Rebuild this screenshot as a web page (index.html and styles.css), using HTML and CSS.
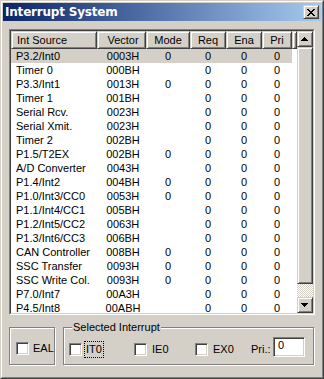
FILE: index.html
```html
<!DOCTYPE html>
<html>
<head>
<meta charset="utf-8">
<title>Interrupt System</title>
<link rel="stylesheet" href="styles.css">
</head>
<body>
<div class="window">
  <div class="frame">
    <div class="titlebar">
      <span class="title">Interrupt System</span>
      <div class="close raised">
        <svg width="8" height="7" viewBox="0 0 8 7" shape-rendering="crispEdges">
          <rect x="0" y="0" width="2" height="1"/><rect x="6" y="0" width="2" height="1"/>
          <rect x="1" y="1" width="2" height="1"/><rect x="5" y="1" width="2" height="1"/>
          <rect x="2" y="2" width="4" height="1"/>
          <rect x="3" y="3" width="2" height="1"/>
          <rect x="2" y="4" width="4" height="1"/>
          <rect x="1" y="5" width="2" height="1"/><rect x="5" y="5" width="2" height="1"/>
          <rect x="0" y="6" width="2" height="1"/><rect x="6" y="6" width="2" height="1"/>
        </svg>
      </div>
    </div>
    <div class="content">
      <div class="lv">
        <div class="lv-in">
          <div class="list">
            <div class="header">
              <div class="hcell c1 raised">Int Source</div>
              <div class="hcell c2 raised">Vector</div>
              <div class="hcell raised">Mode</div>
              <div class="hcell raised">Req</div>
              <div class="hcell raised">Ena</div>
              <div class="hcell raised">Pri</div>
              <div class="hcell raised"></div>
            </div>
            <div class="row sel"><span>P3.2/Int0</span><span class="c2">0003H</span><span>0</span><span>0</span><span>0</span><span>0</span></div>
            <div class="row"><span>Timer 0</span><span class="c2">000BH</span><span></span><span>0</span><span>0</span><span>0</span></div>
            <div class="row"><span>P3.3/Int1</span><span class="c2">0013H</span><span>0</span><span>0</span><span>0</span><span>0</span></div>
            <div class="row"><span>Timer 1</span><span class="c2">001BH</span><span></span><span>0</span><span>0</span><span>0</span></div>
            <div class="row"><span>Serial Rcv.</span><span class="c2">0023H</span><span></span><span>0</span><span>0</span><span>0</span></div>
            <div class="row"><span>Serial Xmit.</span><span class="c2">0023H</span><span></span><span>0</span><span>0</span><span>0</span></div>
            <div class="row"><span>Timer 2</span><span class="c2">002BH</span><span></span><span>0</span><span>0</span><span>0</span></div>
            <div class="row"><span>P1.5/T2EX</span><span class="c2">002BH</span><span>0</span><span>0</span><span>0</span><span>0</span></div>
            <div class="row"><span>A/D Converter</span><span class="c2">0043H</span><span></span><span>0</span><span>0</span><span>0</span></div>
            <div class="row"><span>P1.4/Int2</span><span class="c2">004BH</span><span>0</span><span>0</span><span>0</span><span>0</span></div>
            <div class="row"><span>P1.0/Int3/CC0</span><span class="c2">0053H</span><span>0</span><span>0</span><span>0</span><span>0</span></div>
            <div class="row"><span>P1.1/Int4/CC1</span><span class="c2">005BH</span><span></span><span>0</span><span>0</span><span>0</span></div>
            <div class="row"><span>P1.2/Int5/CC2</span><span class="c2">0063H</span><span></span><span>0</span><span>0</span><span>0</span></div>
            <div class="row"><span>P1.3/Int6/CC3</span><span class="c2">006BH</span><span></span><span>0</span><span>0</span><span>0</span></div>
            <div class="row"><span>CAN Controller</span><span class="c2">008BH</span><span>0</span><span>0</span><span>0</span><span>0</span></div>
            <div class="row"><span>SSC Transfer</span><span class="c2">0093H</span><span>0</span><span>0</span><span>0</span><span>0</span></div>
            <div class="row"><span>SSC Write Col.</span><span class="c2">0093H</span><span>0</span><span>0</span><span>0</span><span>0</span></div>
            <div class="row"><span>P7.0/Int7</span><span class="c2">00A3H</span><span></span><span>0</span><span>0</span><span>0</span></div>
            <div class="row"><span>P4.5/Int8</span><span class="c2">00ABH</span><span></span><span>0</span><span>0</span><span>0</span></div>
          </div>
          <div class="vscroll">
            <div class="sbtn raised">
              <svg width="7" height="4" viewBox="0 0 7 4" shape-rendering="crispEdges">
                <rect x="3" y="0" width="1" height="1"/><rect x="2" y="1" width="3" height="1"/>
                <rect x="1" y="2" width="5" height="1"/><rect x="0" y="3" width="7" height="1"/>
              </svg>
            </div>
            <div class="thumb raised"></div>
            <div class="track"></div>
            <div class="sbtn raised">
              <svg width="7" height="4" viewBox="0 0 7 4" shape-rendering="crispEdges">
                <rect x="0" y="0" width="7" height="1"/><rect x="1" y="1" width="5" height="1"/>
                <rect x="2" y="2" width="3" height="1"/><rect x="3" y="3" width="1" height="1"/>
              </svg>
            </div>
          </div>
        </div>
      </div>
      <div class="groups">
        <div class="group g-eal">
          <div class="item">
            <span class="cb"></span><span class="lbl">EAL</span>
          </div>
        </div>
        <div class="group g-sel">
          <span class="gtitle">Selected Interrupt</span>
          <div class="gbody">
            <div class="item w-it0"><span class="cb"></span><span class="focus">IT0</span></div>
            <div class="item w-ie0"><span class="cb"></span><span class="lbl l5">IE0</span></div>
            <div class="item w-ex0"><span class="cb"></span><span class="lbl l5">EX0</span></div>
            <span class="pri">Pri.:</span>
            <div class="edit">0</div>
          </div>
        </div>
      </div>
    </div>
  </div>
</div>
</body>
</html>
```

FILE: styles.css
```css
* { box-sizing: border-box; }
html, body { margin: 0; padding: 0; }
body {
  font-family: "Liberation Sans", Arial, sans-serif;
  font-size: 11px;
  color: #000;
  background: #d4d0c8;
}
.raised {
  background: #d4d0c8;
  border: 1px solid;
  border-color: #d4d0c8 #404040 #404040 #d4d0c8;
  box-shadow: inset 1px 1px #fff, inset -1px -1px #808080;
}
.window {
  width: 324px;
  height: 379px;
  border: 1px solid;
  border-color: #d4d0c8 #404040 #404040 #d4d0c8;
  background: #d4d0c8;
}
.frame {
  height: 100%;
  border: 1px solid;
  border-color: #fff #808080 #808080 #fff;
  padding: 1px;
  display: flex;
  flex-direction: column;
}
.titlebar {
  height: 18px;
  flex: none;
  display: flex;
  align-items: center;
  padding: 0 2px;
  background: linear-gradient(to right, #0a246a, #a6caf0);
}
.title {
  color: #fff;
  font-family: "DejaVu Sans", sans-serif;
  font-weight: bold;
  font-size: 12px;
  letter-spacing: -0.2px;
  line-height: 14px;
}
.close {
  margin-left: auto;
  width: 16px;
  height: 14px;
  display: flex;
  align-items: center;
  justify-content: center;
}
.close svg { display: block; margin-left: -1px; }
.content {
  flex: 1;
  padding: 8px 6px 0 6px;
}
.lv {
  height: 286px;
  border: 1px solid;
  border-color: #808080 #fff #fff #808080;
}
.lv-in {
  height: 100%;
  border: 1px solid;
  border-color: #404040 #d4d0c8 #d4d0c8 #404040;
  background: #fff;
  display: flex;
}
.list {
  width: 286px;
  overflow: hidden;
}
.header {
  display: grid;
  grid-template-columns: 86px 49px 44px 36px 36px 30px 5px;
  height: 18px;
}
.hcell {
  line-height: 16px;
  text-align: center;
  white-space: nowrap;
  overflow: hidden;
}
.hcell.c1 { text-align: left; padding-left: 5px; }
.c2 { padding-left: 3px; }
.row {
  width: 281px;
  display: grid;
  grid-template-columns: 86px 49px 44px 36px 36px 30px;
  height: 14px;
  line-height: 14px;
  white-space: nowrap;
}
.row > span { text-align: center; }
.row > span:first-child { text-align: left; padding-left: 5px; }
.row.sel { background: #d4d0c8; }
.vscroll {
  width: 16px;
  display: flex;
  flex-direction: column;
}
.sbtn {
  height: 16px;
  flex: none;
  display: flex;
  align-items: center;
  justify-content: center;
}
.sbtn svg { display: block; margin-left: -1px; }
.thumb { height: 237px; flex: none; }
.track {
  flex: 1;
  background: repeating-conic-gradient(#d4d0c8 0 25%, #fff 0 50%) 0 0 / 2px 2px;
}
.groups {
  display: flex;
  gap: 8px;
  margin-top: 12px;
}
.group {
  height: 38px;
  border: 1px solid #808080;
  box-shadow: inset 1px 1px #fff, 1px 1px #fff;
}
.g-eal {
  width: 46px;
  padding: 14px 0 0 6px;
}
.g-sel {
  width: 251px;
  display: flex;
  flex-direction: column;
  align-items: flex-start;
}
.gtitle {
  margin: -7px 0 0 8px;
  padding: 0 1px;
  line-height: 13px;
  background: #d4d0c8;
}
.gbody {
  display: flex;
  align-items: flex-start;
  margin-top: 3px;
  padding-left: 5px;
}
.item {
  display: flex;
  align-items: center;
  height: 13px;
  flex: none;
}
.gbody .item { margin-top: 6px; }
.cb {
  width: 13px;
  height: 13px;
  flex: none;
  border: 1px solid;
  border-color: #808080 #fff #fff #808080;
  background: #fff;
  box-shadow: inset 1px 1px #404040, inset -1px -1px #d4d0c8;
}
.lbl { margin-left: 4px; line-height: 13px; }
.lbl.l5 { margin-left: 5px; }
.focus {
  margin-left: 2px;
  padding: 0 1px;
  border: 1px dotted #000;
  line-height: 15px;
}
.w-it0 { width: 65px; }
.w-ie0 { width: 61px; }
.w-ex0 { width: 56px; }
.pri {
  width: 22px;
  margin-top: 6px;
  line-height: 13px;
}
.edit {
  width: 32px;
  height: 20px;
  border: 1px solid;
  border-color: #808080 #fff #fff #808080;
  box-shadow: inset 1px 1px #404040, inset -1px -1px #d4d0c8;
  background: #fff;
  padding: 1px 0 0 4px;
  line-height: 13px;
}
```
